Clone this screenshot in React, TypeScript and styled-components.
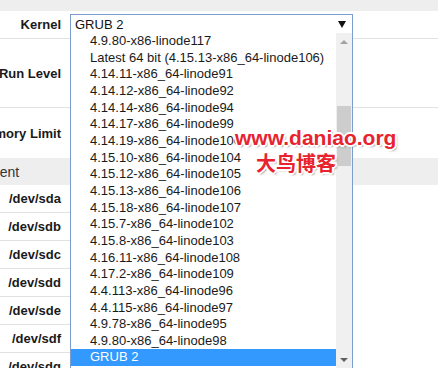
import * as React from "react";
import styled, { createGlobalStyle } from "styled-components";

const KERNELS = [
  "4.9.80-x86-linode117",
  "Latest 64 bit (4.15.13-x86_64-linode106)",
  "4.14.11-x86_64-linode91",
  "4.14.12-x86_64-linode92",
  "4.14.14-x86_64-linode94",
  "4.14.17-x86_64-linode99",
  "4.14.19-x86_64-linode100",
  "4.15.10-x86_64-linode104",
  "4.15.12-x86_64-linode105",
  "4.15.13-x86_64-linode106",
  "4.15.18-x86_64-linode107",
  "4.15.7-x86_64-linode102",
  "4.15.8-x86_64-linode103",
  "4.16.11-x86_64-linode108",
  "4.17.2-x86_64-linode109",
  "4.4.113-x86_64-linode96",
  "4.4.115-x86_64-linode97",
  "4.9.78-x86_64-linode95",
  "4.9.80-x86_64-linode98",
  "GRUB 2",
];

const DEVICES = ["/dev/sda", "/dev/sdb", "/dev/sdc", "/dev/sdd", "/dev/sde", "/dev/sdf", "/dev/sdg"];

const GlobalStyle = createGlobalStyle`
  html, body {
    margin: 0;
    padding: 0;
    background: #fff;
    overflow: hidden;
  }
  body {
    font-family: "Liberation Sans", Arial, sans-serif;
    color: #222;
  }
`;

const App: React.FC = () => {
  const selected = "GRUB 2";

  return (
    <>
      <GlobalStyle />
      <Frame>
        <Page>
          <TopBand />

          <FormRow $height={27}>
            <Label>Kernel</Label>
            <Field>
              <Select>
                <SelectValue>{selected}</SelectValue>
                <SelectArrow />
                <DropList>
                  <Options>
                    {KERNELS.map((k) => (
                      <Option key={k} $active={k === selected}>
                        {k}
                      </Option>
                    ))}
                  </Options>
                  <ScrollBar>
                    <ScrollButton>
                      <ArrowUp />
                    </ScrollButton>
                    <ScrollTrack>
                      <Thumb $offset={56} />
                    </ScrollTrack>
                    <ScrollButton>
                      <ArrowDown />
                    </ScrollButton>
                  </ScrollBar>
                </DropList>
              </Select>
            </Field>
          </FormRow>

          <FormRow $height={68}>
            <Label>Run Level</Label>
            <Field />
          </FormRow>

          <FormRow $height={50} $noBorder>
            <Label>Memory Limit</Label>
            <Field />
          </FormRow>

          <SectionBand>Block Device Assignment</SectionBand>

          {DEVICES.map((d) => (
            <DevRow key={d}>
              <DevLabel>{d}</DevLabel>
              <Field />
            </DevRow>
          ))}
        </Page>

        <Watermark>
          <WatermarkUrl>www.daniao.org</WatermarkUrl>
          <WatermarkName>大鸟博客</WatermarkName>
        </Watermark>
      </Frame>
    </>
  );
};

const Frame = styled.div`
  position: relative;
  width: 438px;
  height: 368px;
  overflow: hidden;
`;

// the screenshot is a crop of a wider form, so the form starts off screen
const Page = styled.div`
  margin-left: -146px;
  width: 584px;
`;

const TopBand = styled.div`
  height: 11px;
  background: #eeeeee;
`;

const FormRow = styled.div<{ $height: number; $noBorder?: boolean }>`
  display: flex;
  height: ${(p) => p.$height}px;
  border-bottom: ${(p) => (p.$noBorder ? "none" : "1px solid #e2e2e2")};
`;

const Label = styled.div`
  width: 216px;
  flex: none;
  box-sizing: border-box;
  padding-right: 9px;
  display: flex;
  align-items: center;
  justify-content: flex-end;
  font-size: 13px;
  font-weight: bold;
  color: #1a1a1a;
  white-space: nowrap;
`;

const Field = styled.div`
  flex: 1;
  padding-top: 3px;
`;

const Select = styled.div`
  position: relative;
  width: 283px;
  height: 20px;
  box-sizing: border-box;
  border: 1px solid #7a9ccf;
  display: flex;
  align-items: center;
  padding-left: 4px;
  background: #fff;
`;

const SelectValue = styled.span`
  flex: 1;
  font-size: 13px;
  color: #111;
`;

const SelectArrow = styled.span`
  width: 0;
  height: 0;
  margin-right: 6px;
  border-left: 4px solid transparent;
  border-right: 4px solid transparent;
  border-top: 7px solid #111;
`;

const DropList = styled.div`
  position: absolute;
  top: 100%;
  left: -1px;
  width: 283px;
  height: 336px;
  box-sizing: border-box;
  border: 1px solid #7a9ccf;
  border-top: none;
  background: #fff;
  display: flex;
  z-index: 5;
`;

const Options = styled.div`
  flex: 1;
  display: flex;
  flex-direction: column;
`;

const Option = styled.div<{ $active?: boolean }>`
  height: 16.67px;
  line-height: 16.67px;
  padding-left: 19px;
  font-size: 13px;
  white-space: nowrap;
  overflow: hidden;
  color: ${(p) => (p.$active ? "#fff" : "#1a1a1a")};
  background: ${(p) => (p.$active ? "#3399ff" : "transparent")};
`;

const ScrollBar = styled.div`
  width: 16px;
  flex: none;
  background: #f0f0f0;
  display: flex;
  flex-direction: column;
`;

const ScrollButton = styled.div`
  height: 17px;
  display: flex;
  align-items: center;
  justify-content: center;
`;

const ArrowUp = styled.span`
  width: 0;
  height: 0;
  border-left: 4px solid transparent;
  border-right: 4px solid transparent;
  border-bottom: 4px solid #a3a3a3;
`;

const ArrowDown = styled(ArrowUp)`
  border-bottom: none;
  border-top: 4px solid #606060;
`;

const ScrollTrack = styled.div`
  flex: 1;
  padding: 0 1px;
`;

const Thumb = styled.div<{ $offset: number }>`
  margin-top: ${(p) => p.$offset}px;
  height: 60px;
  background: #cdcdcd;
`;

const SectionBand = styled.div`
  height: 27px;
  background: #eeeeee;
  display: flex;
  align-items: center;
  padding-left: 8px;
  font-size: 14px;
  color: #333;
  white-space: nowrap;
`;

const DevRow = styled.div`
  display: flex;
  height: 28px;
`;

const DevLabel = styled(Label)`
  border-bottom: 1px solid #e2e2e2;
  font-size: 13px;
`;

const Watermark = styled.div`
  position: absolute;
  left: 235px;
  top: 125px;
  display: flex;
  flex-direction: column;
  align-items: flex-start;
  z-index: 10;
  color: #e8232d;
  font-weight: bold;
  text-shadow:
    1px 1px 0 #fff, -1px -1px 0 #fff, 1px -1px 0 #fff, -1px 1px 0 #fff,
    2px 0 0 #fff, -2px 0 0 #fff, 0 2px 0 #fff, 0 -2px 0 #fff,
    2px 2px 2px rgba(0, 0, 0, 0.35);
`;

const WatermarkUrl = styled.span`
  font-family: "Liberation Sans", Arial, sans-serif;
  font-size: 21px;
  line-height: 26px;
`;

const WatermarkName = styled.span`
  margin-left: 21px;
  font-family: "Noto Sans CJK SC", sans-serif;
  font-size: 20px;
  line-height: 24px;
`;

export default App;
